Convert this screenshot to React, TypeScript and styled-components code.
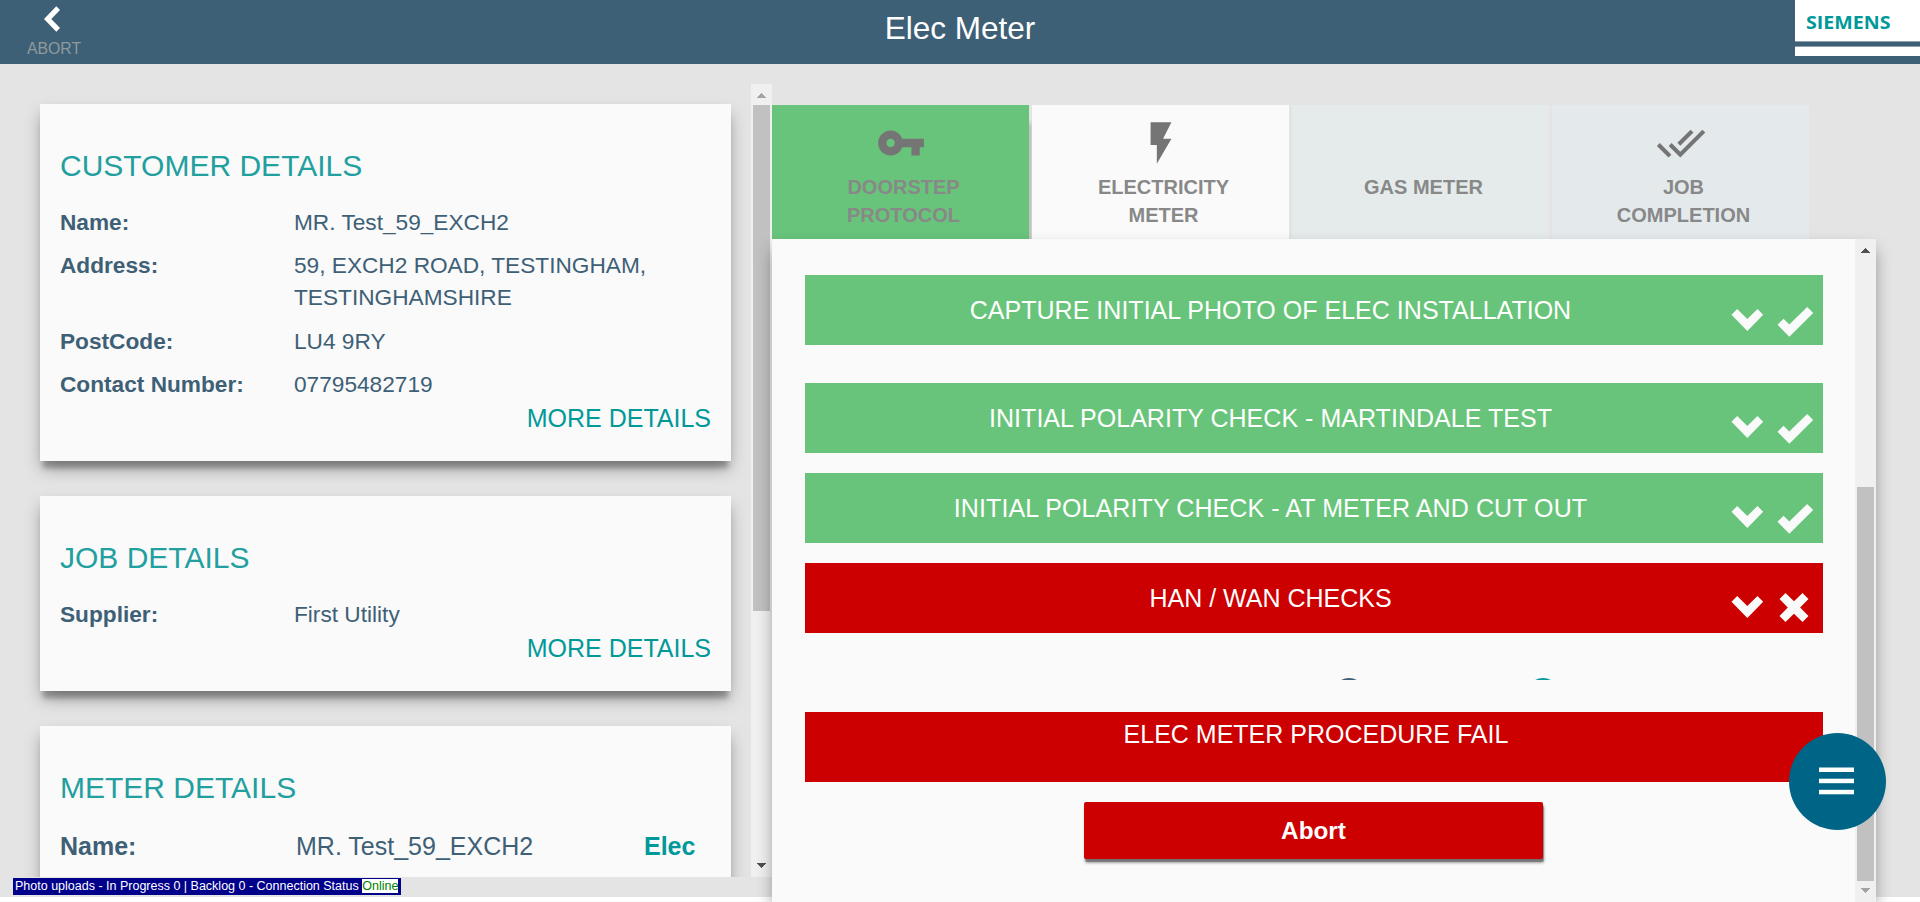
import React from "react";
import styled, { createGlobalStyle } from "styled-components";
import { MdDoneAll, MdFlashOn, MdVpnKey } from "react-icons/md";

const color = {
  navy: "#3e6076",
  teal: "#009999",
  green: "#68c47a",
  red: "#cc0000",
  page: "#e4e4e4",
  paper: "#fafafa",
};

const GlobalStyle = createGlobalStyle`
  *, *::before, *::after { box-sizing: border-box; }
  body {
    margin: 0;
    background: #fff;
    overflow: hidden;
    font-family: "Liberation Sans", Arial, sans-serif;
  }
`;

const Page = styled.div`
  display: flex;
  flex-direction: column;
  height: 902px;
  overflow: hidden;
`;

/* ---------- header ---------- */

const Header = styled.header`
  display: grid;
  grid-template-columns: 1fr auto 1fr;
  align-items: start;
  flex: none;
  height: 64px;
  background: ${color.navy};
`;

const BackButton = styled.button`
  display: flex;
  flex-direction: column;
  align-items: flex-start;
  justify-self: start;
  padding: 0 0 0 27px;
  border: 0;
  background: none;
  color: #8f9a9c;
  font: 15.8px/18px "Liberation Sans", Arial, sans-serif;

  svg {
    display: block;
    height: 40px;
    margin-left: 17px;
  }
`;

const Title = styled.h1`
  margin: 0;
  color: #fff;
  font-size: 31.5px;
  font-weight: 400;
  line-height: 56px;
`;

const Logo = styled.div`
  justify-self: end;
  width: 125px;
  height: 56px;
  background: #fff;

  svg {
    display: block;
  }
`;

/* ---------- scrollbars ---------- */

const Track = styled.div`
  display: flex;
  flex-direction: column;
  align-items: center;
  flex: none;
  width: 21px;
  background: #f0f0f0;
`;

const ArrowBox = styled.div<{ $down?: boolean }>`
  display: flex;
  align-items: center;
  justify-content: center;
  flex: none;
  height: 21px;
  padding: ${(p) => (p.$down ? "0 0 2px" : "2px 0 0")};
`;

const Thumb = styled.div<{ $before: number; $size: number }>`
  flex: none;
  width: 17px;
  height: ${(p) => p.$size}px;
  margin-top: ${(p) => p.$before}px;
  background: #c1c1c1;
`;

const Spring = styled.div`
  flex: 1;
`;

/* ---------- left column ---------- */

const Main = styled.main`
  display: flex;
  flex: none;
  height: 833px;
  background: ${color.page};
`;

const Sidebar = styled.aside`
  display: flex;
  width: 772px;
  height: 793px;
  margin-top: 20px;
`;

const CardList = styled.div`
  display: flex;
  flex-direction: column;
  flex: 1;
  gap: 35px;
  padding: 20px 20px 0 40px;
  overflow: hidden;
`;

const Card = styled.section`
  flex: none;
  padding: 41px 20px 27px;
  background: ${color.paper};
  box-shadow: 0 10px 5px -3px rgba(0, 0, 0, 0.24), 0 9px 16px -2px rgba(0, 0, 0, 0.36);
`;

const CardTitle = styled.h2`
  margin: 0 0 20px;
  color: #229f9f;
  font-size: 30px;
  font-weight: 400;
  line-height: 41px;
`;

const DetailRow = styled.div<{ $large?: boolean }>`
  display: grid;
  grid-template-columns: ${(p) => (p.$large ? "236px 348px 1fr" : "234px 1fr")};
  margin: ${(p) => (p.$large ? "22px 0 40px" : "0")};
  color: ${color.navy};
  font-size: ${(p) => (p.$large ? "25px" : "22.67px")};
  line-height: 32px;

  & + & {
    margin-top: 11.33px;
  }
`;

const Label = styled.span`
  font-weight: 700;
`;

const Fuel = styled.span`
  color: ${color.teal};
  font-weight: 700;
`;

const MoreLink = styled.a`
  display: block;
  margin-top: 2px;
  color: ${color.teal};
  font-size: 25px;
  line-height: 32px;
  text-align: right;
`;

/* ---------- right column ---------- */

const Workspace = styled.div`
  display: flex;
  flex-direction: column;
  width: 1104px;
  height: 797px;
  margin-top: 41px;
`;

const TabBar = styled.nav`
  display: flex;
  flex: none;
  gap: 3px;
  height: 134px;
`;

const Tab = styled.div<{ $bg: string; $raised?: boolean }>`
  position: relative;
  display: flex;
  flex-direction: column;
  align-items: center;
  width: 257px;
  padding-top: 13px;
  background: ${(p) => p.$bg};
  box-shadow: ${(p) => (p.$raised ? "4px 16px 5px -2px rgba(0, 0, 0, 0.22)" : "none")};
`;

const TabIcon = styled.div`
  height: 50px;
  margin-bottom: 5px;
  color: #757575;
  font-size: 50px;

  svg {
    display: block;
  }
`;

const TabLabel = styled.span`
  width: 150px;
  margin-left: 6px;
  color: #888;
  font-size: 20px;
  font-weight: 700;
  line-height: 28px;
  text-align: center;
`;

const Panel = styled.section`
  position: relative;
  display: flex;
  flex: none;
  height: 663px;
  background: ${color.paper};
  box-shadow: 0 9px 16px -2px rgba(0, 0, 0, 0.42);
`;

const Steps = styled.div`
  display: flex;
  flex-direction: column;
  flex: 1;
  padding: 36px 32px 0 33px;
`;

const Step = styled.div<{ $bg: string; $after: number }>`
  display: flex;
  flex: none;
  height: 70px;
  margin-bottom: ${(p) => p.$after}px;
  background: ${(p) => p.$bg};
  color: ${color.paper};
`;

const StepTitle = styled.span<{ $tracking: number }>`
  width: 926px;
  padding: 20px 0 0 5px;
  color: #fff;
  font-size: 25px;
  letter-spacing: ${(p) => p.$tracking}px;
  line-height: 30px;
  text-align: center;
`;

const StepIcons = styled.span<{ $shift: number }>`
  display: flex;
  align-items: flex-start;
  padding-top: ${(p) => 30 + p.$shift}px;

  svg {
    display: block;
  }
`;

const Options = styled.div`
  display: flex;
  flex: none;
  gap: 161.5px;
  height: 2px;
  margin: 25px 0 32px;
  padding-left: 528px;
  overflow: hidden;
`;

const Radio = styled.i<{ $tone: string }>`
  flex: none;
  width: 32px;
  height: 32px;
  border: 2px solid ${(p) => p.$tone};
  border-radius: 50%;
`;

const FailBanner = styled.div`
  flex: none;
  height: 70px;
  padding: 7px 0 0 4px;
  background: ${color.red};
  color: #fff;
  font-size: 25px;
  line-height: 30px;
  text-align: center;
`;

const AbortButton = styled.button`
  display: flex;
  align-items: center;
  justify-content: center;
  align-self: center;
  width: 459px;
  height: 57px;
  margin: 20px 1px 0 0;
  border: 0;
  border-radius: 2px;
  background: ${color.red};
  box-shadow: 1px 3px 1px rgba(0, 0, 0, 0.3), 1px 4px 3px rgba(0, 0, 0, 0.35);
  color: #fff;
  font: 700 24.3px "Liberation Sans", Arial, sans-serif;
`;

/* ---------- overlays ---------- */

const MenuButton = styled.button`
  position: fixed;
  top: 733px;
  left: 1789px;
  width: 97px;
  height: 97px;
  padding: 0;
  border: 0;
  border-radius: 50%;
  background: #006487;

  svg {
    display: block;
  }
`;

const StatusBar = styled.div`
  position: fixed;
  top: 878px;
  left: 13px;
  height: 17px;
  padding: 1px 3px 1px 2px;
  background: #00008b;
  color: #fff;
  font-size: 12.5px;
  line-height: 14px;
  white-space: pre;
`;

const Online = styled.span`
  display: inline-block;
  height: 14px;
  background: #fff;
  color: green;
`;

/* ---------- parts ---------- */

function Arrow({ down, dim }: { down?: boolean; dim?: boolean }) {
  return (
    <ArrowBox $down={down}>
      <svg width="9" height="5" shapeRendering="crispEdges">
        <path d={down ? "M0 0h9L4.5 5z" : "M0 5h9L4.5 0z"} fill={dim ? "#a3a3a3" : "#505050"} />
      </svg>
    </ArrowBox>
  );
}

function Scrollbar({ before, size, at }: { before: number; size: number; at: "start" | "end" }) {
  return (
    <Track>
      <Arrow dim={at === "start"} />
      <Thumb $before={before} $size={size} />
      <Spring />
      <Arrow down dim={at === "end"} />
    </Track>
  );
}

function Detail({ label, children }: { label: string; children: React.ReactNode }) {
  return (
    <DetailRow>
      <Label>{label}</Label>
      <span>{children}</span>
    </DetailRow>
  );
}

type StepData = { title: string; passed: boolean; after: number; shift: number; tracking: number };

const steps: StepData[] = [
  { title: "CAPTURE INITIAL PHOTO OF ELEC INSTALLATION", passed: true, after: 38, shift: 1, tracking: 0.02 },
  { title: "INITIAL POLARITY CHECK - MARTINDALE TEST", passed: true, after: 20, shift: 0, tracking: 0.03 },
  { title: "INITIAL POLARITY CHECK - AT METER AND CUT OUT", passed: true, after: 20, shift: 0, tracking: 0.09 },
  { title: "HAN / WAN CHECKS", passed: false, after: 20, shift: 0, tracking: 0 },
];

function StepMarks({ passed }: { passed: boolean }) {
  return (
    <svg width="84" height="32" viewBox="0 0 84 32" fill="currentColor">
      <path d="M0.5 8.7 6.2 3 16.3 13 26.5 3 32.2 8.7 16.3 25z" />
      {passed ? (
        <path d="M46.5 18.7 52.5 12.7 58.3 18.4 76.2 1 82.2 7 58.3 30.8z" />
      ) : (
        <path d="M48.5 6 54.5 0 63 8.3 71.5 0 77.5 6 69.1 14.5 77.5 23 71.5 29 63 20.7 54.5 29 48.5 23 56.8 14.5z" />
      )}
    </svg>
  );
}

const tabs = [
  { label: "DOORSTEP PROTOCOL", bg: color.green, icon: <MdVpnKey />, raised: true },
  { label: "ELECTRICITY METER", bg: color.paper, icon: <MdFlashOn /> },
  { label: "GAS METER", bg: "#e4ebea", icon: null },
  { label: "JOB COMPLETION", bg: "#e4eaec", icon: <MdDoneAll /> },
];

export default function App() {
  return (
    <Page>
      <GlobalStyle />
      <Header>
        <BackButton>
          <svg width="17" height="40" fill="#fff">
            <path d="M0 19 12.3 6.3 16 10 7.3 19 16 28 12.3 31.7z" />
          </svg>
          ABORT
        </BackButton>
        <Title>Elec Meter</Title>
        <Logo>
          <svg width="125" height="56">
            <text
              x="11"
              y="28.5"
              fill={color.teal}
              fontFamily="'Open Sans', sans-serif"
              fontSize="18"
              fontWeight="700"
              textLength="84.5"
              lengthAdjust="spacingAndGlyphs"
            >
              SIEMENS
            </text>
            <rect y="41" width="125" height="6" fill="#8ba0ae" />
            <rect y="42" width="125" height="4" fill={color.navy} />
          </svg>
        </Logo>
      </Header>

      <Main>
        <Sidebar>
          <CardList>
            <Card>
              <CardTitle>CUSTOMER DETAILS</CardTitle>
              <Detail label="Name:">MR. Test_59_EXCH2</Detail>
              <Detail label="Address:">59, EXCH2 ROAD, TESTINGHAM, TESTINGHAMSHIRE</Detail>
              <Detail label="PostCode:">LU4 9RY</Detail>
              <Detail label="Contact Number:">07795482719</Detail>
              <MoreLink>MORE DETAILS</MoreLink>
            </Card>
            <Card>
              <CardTitle>JOB DETAILS</CardTitle>
              <Detail label="Supplier:">First Utility</Detail>
              <MoreLink>MORE DETAILS</MoreLink>
            </Card>
            <Card>
              <CardTitle>METER DETAILS</CardTitle>
              <DetailRow $large>
                <Label>Name:</Label>
                <span>MR. Test_59_EXCH2</span>
                <Fuel>Elec</Fuel>
              </DetailRow>
            </Card>
          </CardList>
          <Scrollbar before={0} size={506} at="start" />
        </Sidebar>

        <Workspace>
          <TabBar>
            {tabs.map((tab) => (
              <Tab key={tab.label} $bg={tab.bg} $raised={tab.raised}>
                <TabIcon>{tab.icon}</TabIcon>
                <TabLabel>{tab.label}</TabLabel>
              </Tab>
            ))}
          </TabBar>
          <Panel>
            <Steps>
              {steps.map((step) => (
                <Step key={step.title} $bg={step.passed ? color.green : color.red} $after={step.after}>
                  <StepTitle $tracking={step.tracking}>{step.title}</StepTitle>
                  <StepIcons $shift={step.shift}>
                    <StepMarks passed={step.passed} />
                  </StepIcons>
                </Step>
              ))}
              <Options>
                <Radio $tone={color.navy} />
                <Radio $tone={color.teal} />
              </Options>
              <FailBanner>ELEC METER PROCEDURE FAIL</FailBanner>
              <AbortButton>Abort</AbortButton>
            </Steps>
            <Scrollbar before={227} size={394} at="end" />
          </Panel>
        </Workspace>
      </Main>

      <MenuButton aria-label="Menu">
        <svg width="97" height="97" fill="#fff">
          <rect x="30" y="34.5" width="35" height="4.5" />
          <rect x="30" y="45.7" width="35" height="4.5" />
          <rect x="30" y="56.8" width="35" height="4.5" />
        </svg>
      </MenuButton>
      <StatusBar>
        {"Photo uploads - In Progress 0 | Backlog 0 - Connection Status "}
        <Online>Online</Online>
      </StatusBar>
    </Page>
  );
}
